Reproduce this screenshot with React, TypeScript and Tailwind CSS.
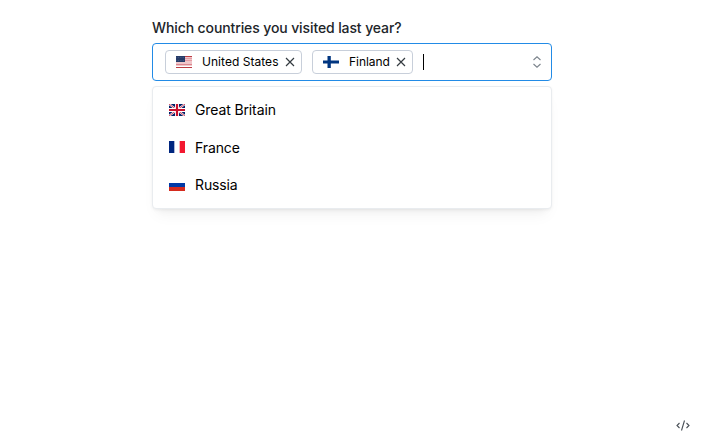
import React from "react";

function Flag({ code }: { code: string }) {
  return (
    <svg width="16" height="12" viewBox="0 0 16 12" className="block shrink-0">
      {code === "us" && (
        <>
          <rect width="16" height="12" fill="#f0c6ca" />
          <path d="M0 .5h16M0 11.5h16" stroke="#bd3d44" />
          <path d="M8 2.5h8M8 4.5h8" stroke="#e2929a" strokeWidth=".8" />
          <path d="M0 8.5h16" stroke="#d77780" strokeWidth=".8" />
          <path d="M0 10.5h16" stroke="#fff" />
          <rect width="9" height="6" fill="#263b68" />
          <path d="M.5 1.5h8M.5 4.5h8" stroke="#60709a" strokeWidth=".6" strokeDasharray=".7 1" />
        </>
      )}
      {code === "fi" && (
        <>
          <rect width="16" height="12" fill="#fff" />
          <path d="M0 4.4h16v3.2H0zM4.5 0h3.3v12H4.5z" fill="#003580" />
        </>
      )}
      {code === "gb" && (
        <>
          <rect width="16" height="12" fill="#012169" />
          <path d="M0 0l16 12M16 0L0 12" stroke="#fff" strokeWidth="2" />
          <path d="M0 0l16 12M16 0L0 12" stroke="#c8102e" strokeWidth=".8" />
          <path d="M8 0v12M0 6h16" stroke="#fff" strokeWidth="4" />
          <path d="M8 0v12M0 6h16" stroke="#c8102e" strokeWidth="2.2" />
        </>
      )}
      {code === "fr" && (
        <>
          <rect width="16" height="12" fill="#fff" />
          <rect width="5.33" height="12" fill="#00267f" />
          <rect x="10.67" width="5.33" height="12" fill="#f31830" />
        </>
      )}
      {code === "ru" && (
        <>
          <rect width="16" height="12" fill="#fff" />
          <rect y="4" width="16" height="8" fill="#0039a6" />
          <rect y="8" width="16" height="4" fill="#d52b1e" />
        </>
      )}
    </svg>
  );
}

function Chip({ code, label, size }: { code: string; label: string; size: string }) {
  return (
    <div className={`flex h-6 shrink-0 items-center rounded border border-[#c8cfda] bg-white pr-[6px] pl-[10px] ${size}`}>
      <Flag code={code} />
      <span className="ml-[10px] text-xs whitespace-nowrap">{label}</span>
      <svg width="10" height="10" viewBox="0 0 10 10" className="ml-auto shrink-0" fill="none" stroke="#343a40" strokeWidth="1.15">
        <path d="M1 1l8 8M9 1L1 9" />
      </svg>
    </div>
  );
}

const options = [
  { code: "gb", label: "Great Britain", nudge: "" },
  { code: "fr", label: "France", nudge: "pt-px" },
  { code: "ru", label: "Russia", nudge: "" },
];

export default function App() {
  return (
    <div className="flex h-[444px] w-[702px] flex-col justify-between overflow-hidden bg-white font-['Inter',sans-serif] text-black">
      <div className="ml-[152px] w-[400px] pt-[17px]">
        <div className="h-[26px] text-sm leading-[22px] font-medium tracking-[-0.11px] text-[#212529]">
          Which countries you visited last year?
        </div>
        <div className="flex h-[38px] items-center rounded border border-[#228be6] pr-2 pl-3">
          <Chip code="us" label="United States" size="w-[137px] tracking-[0.04px]" />
          <div className="w-[10px]" />
          <Chip code="fi" label="Finland" size="w-[101px] tracking-[-0.05px]" />
          <div className="ml-[10px] h-4 w-px bg-black" />
          <svg width="12" height="14" viewBox="0 0 12 14" className="ml-auto" fill="none" stroke="#7b838b" strokeWidth="1.1">
            <path d="M2.5 5L6 1.8 9.5 5M2.5 9L6 12.2 9.5 9" />
          </svg>
        </div>
        <div className="mt-[5px] h-[123px] rounded border border-[#e9ecef] bg-white p-1 shadow-[0_1px_3px_rgba(0,0,0,0.05),0_10px_15px_-5px_rgba(0,0,0,0.05),0_7px_7px_-5px_rgba(0,0,0,0.04)]">
          {options.map(({ code, label, nudge }) => (
            <div key={code} className="flex h-[37.5px] items-center px-3 text-sm tracking-[-0.12px]">
              <Flag code={code} />
              <span className={`ml-[10px] ${nudge}`}>{label}</span>
            </div>
          ))}
        </div>
      </div>
      <svg width="14" height="12" viewBox="0 0 14 12" className="mr-3 mb-3 self-end" fill="none" stroke="#495057" strokeWidth="1.1">
        <path d="M3.5 3L1 5.5 3.5 8M10.5 3L13 5.5 10.5 8M8.5 .5l-3 10" />
      </svg>
    </div>
  );
}
